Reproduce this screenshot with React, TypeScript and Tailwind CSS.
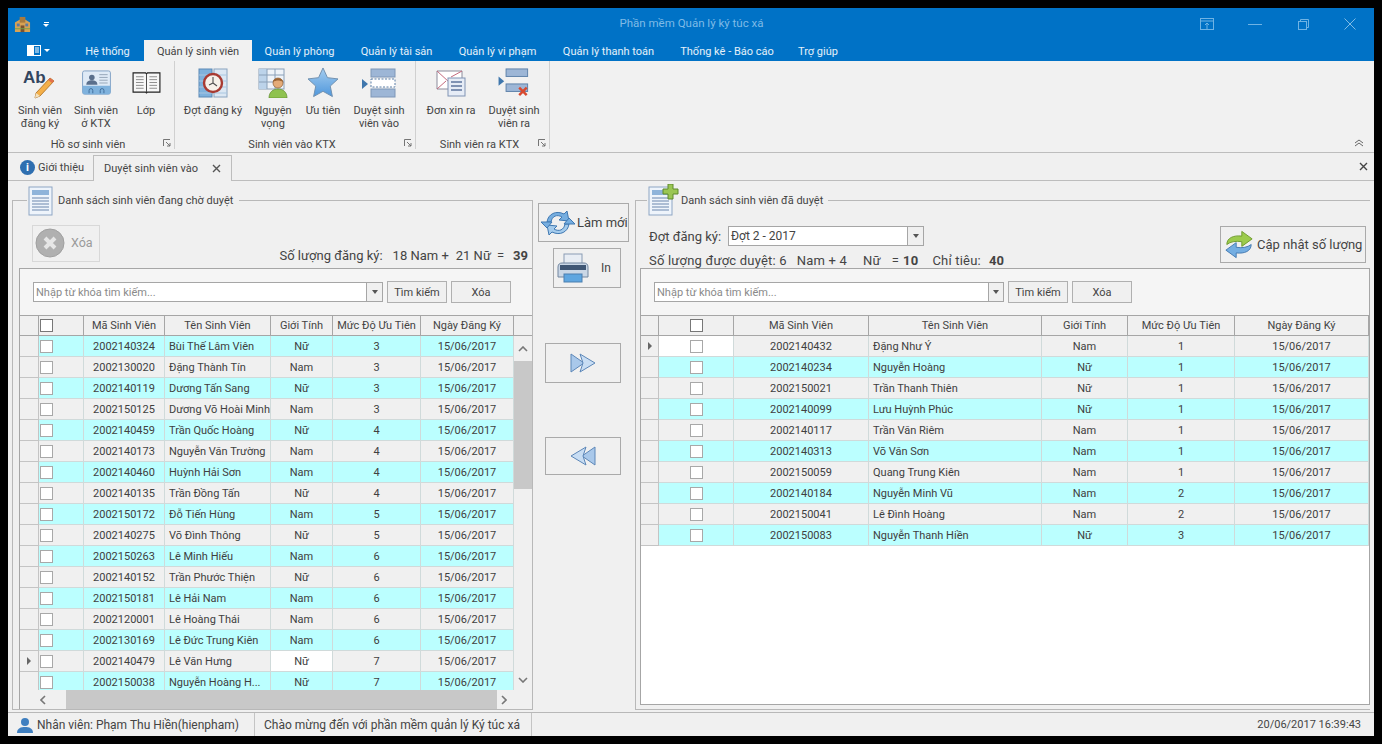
import React from 'react';

const font = { fontFamily: 'Roboto, Tahoma, sans-serif' };

const leftRows = [
  ['2002140324', 'Bùi Thế Lâm Viên', 'Nữ', '3'],
  ['2002130020', 'Đặng Thành Tín', 'Nam', '3'],
  ['2002140119', 'Dương Tấn Sang', 'Nữ', '3'],
  ['2002150125', 'Dương Võ Hoài Minh', 'Nam', '3'],
  ['2002140459', 'Trần Quốc Hoàng', 'Nữ', '4'],
  ['2002140173', 'Nguyễn Văn Trường', 'Nam', '4'],
  ['2002140460', 'Huỳnh Hải Sơn', 'Nam', '4'],
  ['2002140135', 'Trần Đồng Tấn', 'Nữ', '4'],
  ['2002150172', 'Đỗ Tiến Hùng', 'Nam', '5'],
  ['2002140275', 'Võ Đình Thông', 'Nữ', '5'],
  ['2002150263', 'Lê Minh Hiếu', 'Nam', '6'],
  ['2002140152', 'Trần Phước Thiện', 'Nữ', '6'],
  ['2002150181', 'Lê Hải Nam', 'Nam', '6'],
  ['2002120001', 'Lê Hoàng Thái', 'Nam', '6'],
  ['2002130169', 'Lê Đức Trung Kiên', 'Nam', '6'],
  ['2002140479', 'Lê Văn Hưng', 'Nữ', '7'],
  ['2002150038', 'Nguyễn Hoàng H...', 'Nữ', '7'],
];

const rightRows = [
  ['2002140432', 'Đặng Như Ý', 'Nam', '1'],
  ['2002140234', 'Nguyễn Hoàng', 'Nữ', '1'],
  ['2002150021', 'Trần Thanh Thiên', 'Nữ', '1'],
  ['2002140099', 'Lưu Huỳnh Phúc', 'Nữ', '1'],
  ['2002140117', 'Trần Văn Riêm', 'Nam', '1'],
  ['2002140313', 'Võ Văn Sơn', 'Nam', '1'],
  ['2002150059', 'Quang Trung Kiên', 'Nam', '1'],
  ['2002140184', 'Nguyễn Minh Vũ', 'Nam', '2'],
  ['2002150041', 'Lê Đình Hoàng', 'Nam', '2'],
  ['2002150083', 'Nguyễn Thanh Hiền', 'Nữ', '3'],
];

const headers = ['Mã Sinh Viên', 'Tên Sinh Viên', 'Giới Tính', 'Mức Độ Ưu Tiên', 'Ngày Đăng Ký'];
const leftCols = 'grid grid-cols-[19px_45px_81px_106px_62px_88px_93px]';
const rightCols = 'grid grid-cols-[18px_75px_135px_173px_86px_107px_134px]';

const Check = ({ head }: { head?: boolean }) => (
  <span className={`block h-[13px] w-[13px] border ${head ? 'border-[#777] bg-white' : 'border-[#a8a8a8] bg-white'}`} />
);

const Grid = ({
  cols, rows, firstCyan, checkLeft, currentRow, whiteCell,
}: {
  cols: string; rows: string[][]; firstCyan: boolean; checkLeft: boolean; currentRow: number; whiteCell: 'check' | 'gender';
}) => (
  <>
    <div className={`${cols} h-[20px] shrink-0 border-b border-[#a6a6a6] bg-[#f0f0f0] text-[#444]`}>
      <div className="border-r border-[#a6a6a6]" />
      <div className={`flex items-center border-r border-[#a6a6a6] ${checkLeft ? 'pl-[1px]' : 'justify-center'}`}><Check head /></div>
      {headers.map((h) => (
        <div key={h} className="flex items-center justify-center border-r border-[#a6a6a6] whitespace-nowrap">{h}</div>
      ))}
    </div>
    {rows.map((r, i) => {
      const cyan = (i % 2 === 0) === firstCyan;
      const bg = cyan ? 'bg-[#bbffff]' : 'bg-[#f0f0f0]';
      const current = i === currentRow;
      return (
        <div key={r[0]} className={`${cols} h-[21px] shrink-0 text-[#404040]`}>
          <div className="flex items-center justify-center border-r border-b border-[#c4c4c4] bg-[#f0f0f0]">
            {current && <span className="h-0 w-0 border-y-[4px] border-l-[4px] border-y-transparent border-l-[#666]" />}
          </div>
          <div className={`flex items-center border-r border-b border-[#d0dada] ${checkLeft ? 'pl-[1px]' : 'justify-center'} ${current && whiteCell === 'check' ? 'bg-white' : bg}`}><Check /></div>
          <div className={`flex items-center justify-center border-r border-b border-[#d0dada] pt-[1px] ${bg}`}>{r[0]}</div>
          <div className={`flex items-center border-r border-b border-[#d0dada] pt-[1px] pl-[4px] whitespace-nowrap ${bg}`}>{r[1]}</div>
          <div className={`flex items-center justify-center border-r border-b border-[#d0dada] pt-[1px] ${current && whiteCell === 'gender' ? 'bg-white' : bg}`}>{r[2]}</div>
          <div className={`flex items-center justify-center border-r border-b border-[#d0dada] pt-[1px] ${bg}`}>{r[3]}</div>
          <div className={`flex items-center justify-center border-r border-b border-[#d0dada] pt-[1px] ${bg}`}>15/06/2017</div>
        </div>
      );
    })}
  </>
);

const ArrowDown = () => <span className="h-0 w-0 border-x-[3px] border-t-[4px] border-x-transparent border-t-[#555]" />;

const SearchBar = ({ inputW, arrowW }: { inputW: string; arrowW: string }) => (
  <div className="flex h-[47px] shrink-0 items-center border-b border-[#a6a6a6] bg-[#f5f5f5]">
    <div className={`flex h-[20px] ${inputW} items-center border border-[#a6a6a6] bg-white pl-[2px] text-[#8a8a8a]`}>
      Nhập từ khóa tìm kiếm...
    </div>
    <div className={`flex h-[20px] ${arrowW} items-center justify-center border border-l-0 border-[#a6a6a6] bg-[#f0f0f0]`}><ArrowDown /></div>
    <button className="ml-[4px] h-[22px] w-[60px] border border-[#b0b0b0] bg-[#f0f0f0] text-[#444]">Tìm kiếm</button>
    <button className="ml-[4px] h-[22px] w-[60px] border border-[#b0b0b0] bg-[#f0f0f0] text-[#444]">Xóa</button>
  </div>
);

/* ---- ribbon icons ---- */
const AbIcon = () => (
  <svg viewBox="0 0 34 32" className="mt-[3px] h-[32px] w-[34px]">
    <text x="0" y="15" fontFamily="Liberation Sans, sans-serif" fontWeight="700" fontSize="17" fill="#33465f">Ab</text>
    <path d="M27 10l4 3-14 15-5 2 1-5z" fill="#f4b04a" stroke="#a86a1c" strokeWidth=".8" />
    <path d="M27 10l4 3-2 2-4-3z" fill="#e2704e" />
    <path d="M13 25l-1 5 5-2z" fill="#f3e2c0" />
  </svg>
);
const CardIcon = () => (
  <svg viewBox="0 0 32 28" className="h-[26px] w-[31px]">
    <rect x="1" y="1" width="30" height="25" rx="2" fill="#dfeaf6" stroke="#7e9fc4" />
    <path d="M1 17h30v7a2 2 0 0 1-2 2H3a2 2 0 0 1-2-2z" fill="#7fb2dd" />
    <circle cx="11" cy="8" r="3" fill="#5a6f8c" />
    <path d="M5 16c0-4 3-5 6-5s6 1 6 5z" fill="#5a6f8c" />
    <path d="M19 5h9M19 8h9M19 11h9M19 14h9" stroke="#93a3b6" />
    <path d="M8 25v-3a2 2 0 0 1 4 0v3M20 25v-3a2 2 0 0 1 4 0v3" fill="none" stroke="#3f6c99" />
  </svg>
);
const BookIcon = () => (
  <svg viewBox="0 0 30 24" className="h-[23px] w-[29px]">
    <path d="M1 2h13l1 1 1-1h13v20H16l-1 1-1-1H1z" fill="#f7f7f7" stroke="#222" strokeWidth="1.2" />
    <path d="M15 3v19" stroke="#444" />
    <path d="M4 6h8M4 9h8M4 12h8M4 15h8M4 18h8M18 6h8M18 9h8M18 12h8M18 15h8M18 18h8" stroke="#8b8b8b" />
  </svg>
);
const ClockIcon = () => (
  <svg viewBox="0 0 30 30" className="h-[30px] w-[30px]">
    <rect x="1" y="1" width="13" height="28" fill="#7fb1dc" stroke="#5d89b5" />
    <rect x="16" y="1" width="13" height="28" fill="#dbe7f3" stroke="#8aa4c0" />
    <path d="M1 7h13M1 13h13M1 19h13M1 25h13M16 7h13M16 13h13M16 19h13M16 25h13" stroke="#a9c6e0" />
    <circle cx="15" cy="15" r="9" fill="#f6f1ea" stroke="#a83a32" strokeWidth="2.4" />
    <path d="M15 15V9M15 15l4 3M15 15l-4 2" stroke="#4d4d4d" strokeWidth="1.1" fill="none" />
  </svg>
);
const GridUserIcon = () => (
  <svg viewBox="0 0 30 30" className="h-[30px] w-[30px]">
    <rect x="1" y="1" width="25" height="20" fill="#eef3f9" stroke="#8aa0b8" />
    <rect x="1" y="1" width="8" height="20" fill="#bcd3ea" />
    <path d="M1 7h25M1 14h25M9 1v20M17 1v20" stroke="#8aa0b8" />
    <circle cx="20" cy="15" r="5" fill="#e4ab78" stroke="#8b5a30" strokeWidth=".7" />
    <path d="M15 14c0-5 10-5 10 0-3-2-7-2-10 0z" fill="#9a6434" />
    <path d="M11 30c0-6 4-9 9-9s9 3 9 9z" fill="#8fc24f" stroke="#5e8c2d" strokeWidth=".7" />
  </svg>
);
const StarIcon = () => (
  <svg viewBox="0 0 32 32" className="h-[31px] w-[32px]">
    <defs>
      <linearGradient id="starFill" x1="0" y1="0" x2="0" y2="1">
        <stop offset="0" stopColor="#a5cdef" />
        <stop offset="1" stopColor="#4f97dc" />
      </linearGradient>
    </defs>
    <path d="M16 1l4.6 10 10.9 1.3-8 7.4 2.2 10.8-9.7-5.4-9.7 5.4 2.2-10.8-8-7.4L11.4 11z" fill="url(#starFill)" stroke="#6f8fae" />
  </svg>
);
const ApproveInIcon = () => (
  <svg viewBox="0 0 34 30" className="h-[30px] w-[34px]">
    <path d="M0 11l6 5-6 5z" fill="#3f77ad" />
    <rect x="9" y="1" width="24" height="8" fill="#9db6d6" stroke="#7e97b8" />
    <rect x="9" y="11" width="24" height="8" fill="#fff" stroke="#5b7fa8" strokeDasharray="2 1.5" />
    <rect x="9" y="21" width="24" height="8" fill="#9db6d6" stroke="#7e97b8" />
  </svg>
);
const LetterIcon = () => (
  <svg viewBox="0 0 30 28" className="h-[28px] w-[30px]">
    <path d="M1 2h25v18H1z" fill="#fff" stroke="#8b8b9b" />
    <path d="M1 2l12 11M26 2L15 8M1 20l9-8" stroke="#c46a7e" fill="none" />
    <rect x="12" y="9" width="17" height="18" fill="#e6ecf6" stroke="#8094b4" />
    <path d="M15 13h11M15 17h11M15 21h11" stroke="#7f92b3" strokeWidth="2" />
  </svg>
);
const ApproveOutIcon = () => (
  <svg viewBox="0 0 34 32" className="h-[30px] w-[33px]">
    <path d="M0 9l6 5-6 5z" fill="#3f77ad" />
    <rect x="8" y="1" width="23" height="8" fill="#9db6d6" stroke="#5b7fa8" />
    <rect x="8" y="17" width="23" height="8" fill="#9db6d6" stroke="#5b7fa8" />
    <path d="M22 21l8 8M30 21l-8 8" stroke="#d8492f" strokeWidth="2.6" />
  </svg>
);

/* ---- group and button icons ---- */
const DocIcon = ({ plus }: { plus?: boolean }) => (
  <svg viewBox="0 0 32 32" className="h-[32px] w-[32px]">
    <rect x="1" y="3" width="23" height="28" fill="#eef4fb" stroke="#8ea6c4" />
    <rect x="4" y="6" width="17" height="5" fill="#8fb4da" />
    <path d="M4 14h17M4 17h17M4 20h17M4 23h17M4 26h17" stroke="#6a86ad" />
    {plus && <path d="M20 0h5v5h5v5h-5v5h-5v-5h-5V5h5z" fill="#9ac653" stroke="#5f8a2c" />}
  </svg>
);
const DeleteCircle = () => (
  <svg viewBox="0 0 30 30" className="h-[30px] w-[30px]">
    <circle cx="15" cy="15" r="14" fill="#b0b0b0" stroke="#a0a0a0" />
    <path d="M10 10l10 10M20 10L10 20" stroke="#e6e6e6" strokeWidth="4" />
  </svg>
);
const RefreshBlue = () => (
  <svg viewBox="0 0 34 32" className="h-[32px] w-[34px]">
    <path d="M6 15C7 7 15 3 23 7l3-3 2 10-10-1 3-3c-5-3-10-1-11 5z" fill="#76aee0" stroke="#3f78b2" />
    <path d="M28 17c-1 8-9 12-17 8l-3 3-2-10 10 1-3 3c5 3 10 1 11-5z" fill="#a4cbec" stroke="#3f78b2" />
    <path d="M0 15h11l-5 6z" fill="#76aee0" stroke="#3f78b2" />
    <path d="M23 17h11l-6-6z" fill="#76aee0" stroke="#3f78b2" />
  </svg>
);
const PrinterIcon = () => (
  <svg viewBox="0 0 32 30" className="h-[30px] w-[32px]">
    <rect x="7" y="1" width="18" height="13" fill="#e8edf4" stroke="#8a9cb4" />
    <path d="M1 14c0-3 2-4 4-4h22c2 0 4 1 4 4v10H1z" fill="#cad7e6" stroke="#72869f" />
    <rect x="3" y="12" width="26" height="5" fill="#3f5674" />
    <rect x="7" y="21" width="18" height="8" fill="#5fa6e0" stroke="#4a7eaf" />
  </svg>
);
const DoubleArrow = ({ left }: { left?: boolean }) => (
  <svg viewBox="0 0 26 20" className={`h-[20px] w-[26px] ${left ? '-scale-x-100' : ''}`}>
    <path d="M1 1l13 9-13 9z" fill="#a9c8ea" stroke="#5d87b8" />
    <path d="M10 1l15 9-15 9 3-9z" fill="#c8ddf3" stroke="#5d87b8" />
  </svg>
);
const SyncGreen = () => (
  <svg viewBox="0 0 32 30" className="h-[29px] w-[30px]">
    <path d="M3 15C3 8 10 5 19 6V1l11 8-11 8v-5c-7-1-12 0-16 3z" fill="#9ccb4c" stroke="#6d9a2c" />
    <path d="M29 15c0 7-7 10-16 9v5L2 21l11-8v5c7 1 12 0 16-3z" fill="#74aee2" stroke="#4379b0" />
  </svg>
);

const RibbonItem = ({ w, lines, children }: { w: string; lines: string[]; children: React.ReactNode }) => (
  <div className={`flex h-[76px] flex-col items-center ${w}`}>
    <div className="flex h-[43px] items-center justify-center">{children}</div>
    <div className="text-center leading-[13px] whitespace-nowrap text-[#444]">
      {lines.map((l) => <div key={l}>{l}</div>)}
    </div>
  </div>
);

const RibbonGroup = ({ w, label, children }: { w: string; label: string; children: React.ReactNode }) => (
  <div className={`relative flex h-[88px] shrink-0 flex-col border-r border-[#d0d0d0] pl-[5px] ${w}`}>
    <div className="flex">{children}</div>
    <div className="flex h-[14px] items-center justify-center pt-[2px] pr-[11px] text-[#444]">{label}</div>
    <svg viewBox="0 0 8 8" className="absolute right-[3px] bottom-[2px] h-[8px] w-[8px]">
      <path d="M.5 7V.5H7M3 3l4 4M7 4v3H4" fill="none" stroke="#666" strokeWidth=".9" />
    </svg>
  </div>
);

const ribbonTabs = [
  ['Hệ thống', 'w-[73px]'],
  ['Quản lý sinh viên', 'w-[108px]'],
  ['Quản lý phòng', 'w-[95px]'],
  ['Quản lý tài sản', 'w-[99px]'],
  ['Quản lý vi phạm', 'w-[103px]'],
  ['Quản lý thanh toán', 'w-[119px]'],
  ['Thống kê - Báo cáo', 'w-[118px]'],
  ['Trợ giúp', 'w-[64px]'],
];

export default function App() {
  return (
    <div className="flex h-[744px] w-[1382px] flex-col overflow-hidden bg-black p-2 text-[11px] leading-none" style={font}>
      <div className="flex h-[728px] w-[1366px] flex-col bg-[#f0f0f0]">
        {/* title bar */}
        <div className="flex h-[32px] shrink-0 items-center bg-[#0072c6] text-[#7fbbe6]">
          <div className="flex w-[60px] items-center pl-[6px]">
            <svg viewBox="0 0 18 18" className="h-[17px] w-[17px]">
              <path d="M1 7l8-5 8 5v10H1z" fill="#d8a254" />
              <rect x="6" y="1" width="6" height="6" fill="#a87a3e" />
              <rect x="3" y="8" width="3" height="3" fill="#5d7ba3" />
              <rect x="12" y="8" width="3" height="3" fill="#5d7ba3" />
              <rect x="7" y="10" width="4" height="7" fill="#7a5230" />
              <rect x="1" y="13" width="16" height="1" fill="#76a34a" />
            </svg>
            <div className="ml-[12px] flex flex-col items-center gap-[1px]">
              <span className="h-px w-[5px] bg-white" />
              <span className="h-0 w-0 border-x-[3px] border-t-[3px] border-x-transparent border-t-white" />
            </div>
          </div>
          <div className="flex-1 pl-[132px] text-center text-[11.5px]">Phần mềm Quản lý ký túc xá</div>
          <div className="flex w-[191px] items-center">
            <div className="flex w-[48px] justify-center">
              <svg viewBox="0 0 14 12" className="h-[12px] w-[14px]" fill="none" stroke="#6fb3e4"><rect x=".5" y=".5" width="13" height="11" /><path d="M.5 3h13M7 11V5M5 7l2-2 2 2" /></svg>
            </div>
            <div className="flex w-[48px] justify-center"><span className="h-px w-[14px] bg-[#6fb3e4]" /></div>
            <div className="flex w-[48px] justify-center">
              <svg viewBox="0 0 11 11" className="h-[11px] w-[11px]" fill="none" stroke="#6fb3e4"><rect x=".5" y="2.5" width="8" height="8" /><path d="M2.5 2.5v-2h8v8h-2" /></svg>
            </div>
            <div className="flex w-[47px] justify-center pr-[2px]">
              <svg viewBox="0 0 12 12" className="h-[12px] w-[12px]" fill="none" stroke="#7fbbe6"><path d="M.5.5l11 11M11.5.5l-11 11" /></svg>
            </div>
          </div>
        </div>

        {/* ribbon tabs */}
        <div className="flex h-[21px] shrink-0 bg-[#0072c6] text-white/90">
          <div className="flex w-[63px] items-center pl-[19px]">
            <svg viewBox="0 0 14 11" className="h-[11px] w-[14px]">
              <rect width="14" height="11" fill="#fff" />
              <rect x="7" y="1" width="6" height="9" fill="#0072c6" />
              <path d="M8 3h4M8 5h4M8 7h4" stroke="#fff" />
            </svg>
            <span className="ml-[3px] h-0 w-0 border-x-[3px] border-t-[3px] border-x-transparent border-t-white" />
          </div>
          {ribbonTabs.map(([t, w], i) => (
            <div key={t} className={`flex items-center justify-center pt-[2px] whitespace-nowrap ${w} ${i === 1 ? 'bg-[#f1f1f1] text-[#444]' : ''}`}>{t}</div>
          ))}
        </div>

        {/* ribbon */}
        <div className="relative flex h-[92px] shrink-0 border-b border-[#bdbdbd] bg-[#f1f1f1]">
          <RibbonGroup w="w-[167px]" label="Hồ sơ sinh viên">
            <RibbonItem w="w-[54px]" lines={['Sinh viên', 'đăng ký']}><AbIcon /></RibbonItem>
            <RibbonItem w="w-[58px]" lines={['Sinh viên', 'ở KTX']}><CardIcon /></RibbonItem>
            <RibbonItem w="w-[42px]" lines={['Lớp']}><BookIcon /></RibbonItem>
          </RibbonGroup>
          <RibbonGroup w="w-[241px]" label="Sinh viên vào KTX">
            <RibbonItem w="w-[66px]" lines={['Đợt đăng ký']}><ClockIcon /></RibbonItem>
            <RibbonItem w="w-[54px]" lines={['Nguyện', 'vọng']}><GridUserIcon /></RibbonItem>
            <RibbonItem w="w-[46px]" lines={['Ưu tiên']}><StarIcon /></RibbonItem>
            <RibbonItem w="w-[66px]" lines={['Duyệt sinh', 'viên vào']}><ApproveInIcon /></RibbonItem>
          </RibbonGroup>
          <RibbonGroup w="w-[134px]" label="Sinh viên ra KTX">
            <RibbonItem w="w-[60px]" lines={['Đơn xin ra']}><LetterIcon /></RibbonItem>
            <RibbonItem w="w-[66px]" lines={['Duyệt sinh', 'viên ra']}><ApproveOutIcon /></RibbonItem>
          </RibbonGroup>
          <svg viewBox="0 0 10 8" className="absolute right-[10px] bottom-[5px] h-[8px] w-[10px]" fill="none" stroke="#666">
            <path d="M1 4l4-3 4 3M1 7l4-3 4 3" />
          </svg>
        </div>

        {/* document tabs */}
        <div className="flex h-[28px] shrink-0 items-end border-b border-[#bdbdbd] bg-[#f0f0f0] pl-[4px] text-[#444]">
          <div className="flex h-[25px] w-[81px] items-center pl-[8px]">
            <span className="flex h-[15px] w-[15px] items-center justify-center rounded-full bg-[#2f6fb0] font-bold text-white">i</span>
            <span className="ml-[3px] whitespace-nowrap">Giới thiệu</span>
          </div>
          <div className="-mb-px flex h-[26px] w-[139px] items-center border border-b-0 border-[#bdbdbd] bg-[#f0f0f0] pl-[10px]">
            <span className="whitespace-nowrap">Duyệt sinh viên vào</span>
            <svg viewBox="0 0 9 9" className="ml-auto mr-[10px] h-[9px] w-[9px]" stroke="#555" strokeWidth="1.4"><path d="M1 1l7 7M8 1L1 8" /></svg>
          </div>
          <svg viewBox="0 0 9 9" className="mb-[9px] ml-auto mr-[6px] h-[9px] w-[9px]" stroke="#444" strokeWidth="1.4"><path d="M1 1l7 7M8 1L1 8" /></svg>
        </div>

        {/* body */}
        <div className="flex min-h-0 flex-1 pb-[2px] pl-[4px] text-[#444]">
          {/* left group */}
          <div className="flex w-[521px] shrink-0 flex-col">
            <div className="flex h-[38px] shrink-0 items-center">
              <span className="h-px w-[15px] bg-[#b8b8b8]" />
              <span className="ml-[1px]"><DocIcon /></span>
              <span className="ml-[-5px] whitespace-nowrap px-[3px]">Danh sách sinh viên đang chờ duyệt</span>
              <span className="ml-[3px] h-px flex-1 bg-[#b8b8b8]" />
            </div>
            <div className="-mt-[19px] flex min-h-0 flex-1 flex-col border-x border-b border-[#b8b8b8] pt-[19px]">
              <div className="flex h-[49px] shrink-0 items-center">
                <div className="mt-[-1px] ml-[19px] flex h-[37px] w-[68px] items-center border border-[#d8d8d8] pl-[2px] text-[12.5px] text-[#9a9a9a]">
                  <DeleteCircle /><span className="ml-[6px]">Xóa</span>
                </div>
                <div className="mt-[23px] mr-[4px] ml-auto flex text-[13px] whitespace-nowrap">
                  <span>Số lượng đăng ký:</span>
                  <span className="ml-[10px]">18 Nam +</span>
                  <span className="ml-[7px]">21 Nữ</span>
                  <span className="ml-[6px]">=</span>
                  <b className="ml-[9px]">39</b>
                </div>
              </div>
              <div className="ml-[6px] flex min-h-0 flex-1 flex-col border-t border-l border-[#a6a6a6]">
                <SearchBar inputW="ml-[13px] w-[334px]" arrowW="w-[16px]" />
                <div className="flex min-h-0 flex-1">
                  <div className="flex w-[494px] flex-col overflow-hidden">
                    <Grid cols={leftCols} rows={leftRows} firstCyan checkLeft currentRow={15} whiteCell="gender" />
                  </div>
                  <div className="flex w-[18px] flex-col bg-[#f0f0f0]">
                    <div className="h-[20px] border-b border-[#a6a6a6]" />
                    <div className="flex h-[25px] items-center justify-center">
                      <svg viewBox="0 0 10 6" className="h-[6px] w-[10px]" fill="none" stroke="#777" strokeWidth="1.6"><path d="M1 5l4-4 4 4" /></svg>
                    </div>
                    <div className="h-[128px] bg-[#c8c8c8]" />
                    <div className="flex flex-1 items-end justify-center pb-[7px]">
                      <svg viewBox="0 0 10 6" className="h-[6px] w-[10px]" fill="none" stroke="#777" strokeWidth="1.6"><path d="M1 1l4 4 4-4" /></svg>
                    </div>
                  </div>
                </div>
                <div className="flex h-[19px] shrink-0 items-center bg-[#f0f0f0]">
                  <div className="flex w-[46px] justify-center">
                    <svg viewBox="0 0 6 10" className="h-[10px] w-[6px]" fill="none" stroke="#777" strokeWidth="1.6"><path d="M5 1L1 5l4 4" /></svg>
                  </div>
                  <div className="h-full w-[431px] bg-[#c8c8c8]" />
                  <div className="flex flex-1 justify-center pr-[22px]">
                    <svg viewBox="0 0 6 10" className="h-[10px] w-[6px]" fill="none" stroke="#777" strokeWidth="1.6"><path d="M1 1l4 4-4 4" /></svg>
                  </div>
                </div>
              </div>
            </div>
          </div>

          {/* middle buttons */}
          <div className="flex w-[102px] shrink-0 flex-col text-[13px]">
            <button className="mt-[22px] ml-[5px] flex h-[39px] w-[91px] items-center border border-[#aaa] pl-[2px]">
              <RefreshBlue /><span className="ml-[2px] whitespace-nowrap">Làm mới</span>
            </button>
            <button className="mt-[6px] ml-[20px] flex h-[40px] w-[68px] items-center border border-[#aaa] pl-[3px] text-[12px]">
              <PrinterIcon /><span className="ml-[12px]">In</span>
            </button>
            <button className="mt-[55px] ml-[12px] flex h-[40px] w-[76px] items-center justify-center border border-[#aaa]"><DoubleArrow /></button>
            <button className="mt-[54px] ml-[12px] flex h-[38px] w-[76px] items-center justify-center border border-[#aaa]"><DoubleArrow left /></button>
          </div>

          {/* right group */}
          <div className="flex w-[735px] shrink-0 flex-col">
            <div className="flex h-[38px] shrink-0 items-center">
              <span className="h-px w-[12px] bg-[#b8b8b8]" />
              <span className="mt-[-1px] ml-[1px]"><DocIcon plus /></span>
              <span className="ml-[-1px] whitespace-nowrap px-[2px]">Danh sách sinh viên đã duyệt</span>
              <span className="ml-[3px] h-px flex-1 bg-[#b8b8b8]" />
            </div>
            <div className="-mt-[19px] flex min-h-0 flex-1 flex-col border-b border-l border-[#b8b8b8] pt-[19px]">
              <div className="flex h-[49px] shrink-0">
                <div className="flex flex-col pt-[7px] pl-[13px] text-[13px] whitespace-nowrap">
                  <div className="flex h-[20px] items-center">
                    <span className="w-[79px]">Đợt đăng ký:</span>
                    <div className="flex h-[20px] w-[196px] items-center border border-[#a6a6a6] bg-white pl-[2px] text-[12px]">
                      Đợt 2 - 2017
                      <span className="ml-auto flex h-full w-[16px] items-center justify-center border-l border-[#a6a6a6] bg-[#f0f0f0]"><ArrowDown /></span>
                    </div>
                  </div>
                  <div className="mt-[8px] flex leading-[14px] tracking-[0.2px]">
                    <span>Số lượng được duyệt: 6</span>
                    <span className="ml-[10px]">Nam + 4</span>
                    <span className="ml-[16px]">Nữ</span>
                    <span className="ml-[11px]">=</span>
                    <b className="ml-[4px]">10</b>
                    <span className="ml-[14px]">Chỉ tiêu:</span>
                    <b className="ml-[8px]">40</b>
                  </div>
                </div>
                <div className="mt-[7px] mr-[4px] ml-auto flex h-[37px] w-[146px] items-center border border-[#aaa] pl-[3px] text-[13px] whitespace-nowrap">
                  <SyncGreen /><span className="ml-[3px]">Cập nhật số lượng</span>
                </div>
              </div>
              <div className="ml-[4px] mb-[4px] flex min-h-0 flex-1 flex-col border border-[#a6a6a6] bg-white">
                <SearchBar inputW="ml-[13px] w-[335px]" arrowW="w-[15px]" />
                <Grid cols={rightCols} rows={rightRows} firstCyan={false} checkLeft={false} currentRow={0} whiteCell="check" />
              </div>
            </div>
          </div>
        </div>

        {/* status bar */}
        <div className="flex h-[24px] shrink-0 items-center border-t border-[#b8b8b8] bg-[#f0f0f0] text-[12px] text-[#444]">
          <div className="flex h-full w-[246px] shrink-0 items-center pl-[9px]">
            <svg viewBox="0 0 16 16" className="h-[16px] w-[16px]" fill="#3f7fc0">
              <circle cx="8" cy="5" r="4" />
              <path d="M0 16c0-5 4-6 8-6s8 1 8 6z" />
            </svg>
            <span className="ml-[4px] whitespace-nowrap">Nhân viên: Phạm Thu Hiền(hienpham)</span>
          </div>
          <div className="flex h-full w-[278px] shrink-0 items-center border-x border-[#c4c4c4] pl-[9px] whitespace-nowrap">
            Chào mừng đến với phần mềm quản lý Ký túc xá
          </div>
          <div className="ml-auto pr-[13px] text-[11px]">20/06/2017 16:39:43</div>
        </div>
      </div>
    </div>
  );
}
